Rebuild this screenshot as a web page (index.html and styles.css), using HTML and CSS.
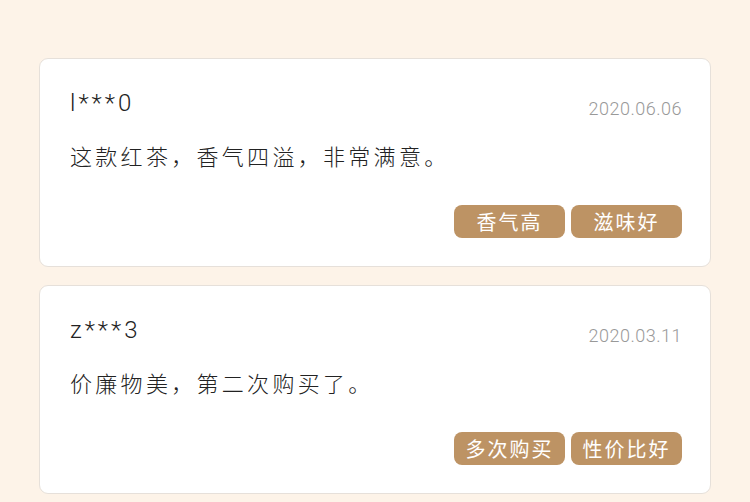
FILE: index.html
```html
<!DOCTYPE html>
<html lang="zh-CN">
<head>
  <meta charset="UTF-8">
  <meta name="viewport" content="width=device-width, initial-scale=1.0">
  <title>评价</title>
  <link rel="stylesheet" href="styles.css">
</head>
<body>
  <div class="page">
    <div class="comment">
      <div class="comment-head">
        <span class="user">l***0</span>
        <span class="date">2020.06.06</span>
      </div>
      <p class="text">这款红茶，香气四溢，非常满意。</p>
      <ul class="tags">
        <li>香气高</li>
        <li>滋味好</li>
      </ul>
    </div>
    <div class="comment">
      <div class="comment-head">
        <span class="user">z***3</span>
        <span class="date">2020.03.11</span>
      </div>
      <p class="text">价廉物美，第二次购买了。</p>
      <ul class="tags">
        <li>多次购买</li>
        <li>性价比好</li>
      </ul>
    </div>
  </div>
</body>
</html>
```

FILE: styles.css
```css
* {
  margin: 0;
  padding: 0;
}
li {
  list-style: none;
}
body {
  background-color: #fdf3e8;
  font-family: Roboto, "Noto Sans CJK SC", sans-serif;
  color: #333;
}
.page {
  padding: 58px 39px 0;
  display: flex;
  flex-direction: column;
  gap: 18px;
}
.comment {
  width: 672px;
  box-sizing: border-box;
  background-color: #fff;
  border: 1px solid #e6e0da;
  border-radius: 9px;
  padding: 29px 28px 28px 30px;
}
.comment-head {
  display: flex;
  justify-content: space-between;
  align-items: flex-end;
  height: 30px;
}
.user {
  font-size: 24px;
  font-weight: 300;
  line-height: 30px;
  letter-spacing: 3px;
  color: #222;
}
.date {
  font-size: 18px;
  font-weight: 300;
  line-height: 18px;
  letter-spacing: 0.5px;
  color: #999;
}
.text {
  margin-top: 20px;
  font-family: "Noto Sans CJK SC", sans-serif;
  font-size: 22px;
  font-weight: 300;
  line-height: 34px;
  letter-spacing: 3.3px;
  color: #222;
}
.tags {
  margin-top: 33px;
  display: flex;
  justify-content: flex-end;
  gap: 6px;
}
.tags li {
  width: 111px;
  height: 33px;
  line-height: 33px;
  text-align: center;
  border-radius: 8px;
  background-color: #bd9364;
  color: #fff;
  font-family: "Noto Sans CJK SC", sans-serif;
  font-size: 20px;
  letter-spacing: 2px;
}
```
